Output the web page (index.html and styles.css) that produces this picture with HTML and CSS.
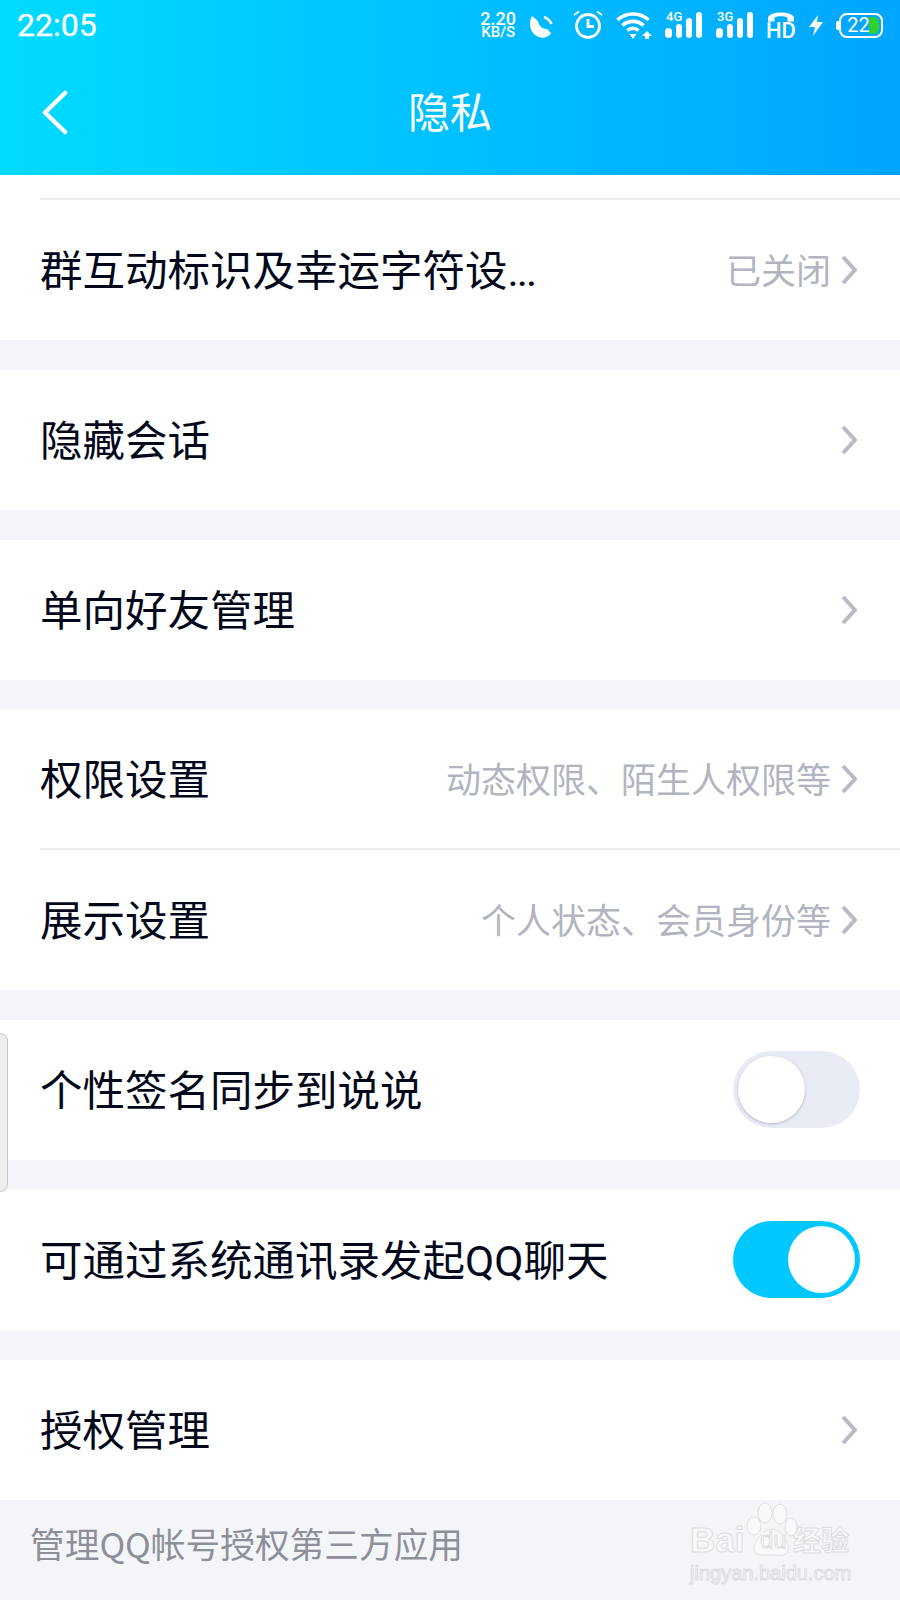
FILE: index.html
```html
<!DOCTYPE html>
<html lang="zh-CN">
<head>
    <meta charset="UTF-8">
    <meta name="viewport" content="width=device-width, initial-scale=1.0">
    <title>隐私</title>
    <link rel="stylesheet" href="styles.css">
</head>
<body>

    <!-- 顶部 -->
    <header class="header">
        <div class="status-bar">
            <span class="time">22:05</span>
            <div class="status-icons">
                <div class="speed"><span>2.20</span><span>KB/S</span></div>
                <svg class="icon-moon" width="24" height="22" viewBox="0 0 24 22">
                    <path d="M3 0 L9 5 C10 10 13 13 18 13 L22 17 C19 23 10 23 5 18 C0 13 0 5 3 0 Z" fill="#fff"/>
                    <path d="M15 1 C18 2 21 5 22.500 8" fill="none" stroke="#fff" stroke-width="2.600"/>
                </svg>
                <svg class="icon-alarm" width="30" height="30" viewBox="0 0 30 30">
                    <circle cx="15" cy="16" r="11.500" fill="none" stroke="#fff" stroke-width="2.800"/>
                    <path d="M15 9 V16.500 H21" fill="none" stroke="#fff" stroke-width="2.800"/>
                    <path d="M1 5 L6 1.500 M29 5 L24 1.500" stroke="#fff" stroke-width="2"/>
                </svg>
                <svg class="icon-wifi" width="36" height="28" viewBox="0 0 36 28">
                    <path d="M1.500 9 C10 1 24 1 32.500 9 M6.500 14.500 C12 9 22 9 27.500 14.500 M11.500 19.500 C14.500 16.500 19.500 16.500 22.500 19.500" fill="none" stroke="#fff" stroke-width="3.600"/>
                    <path d="M13.500 23 H20.500 L17 28 Z" fill="#fff"/>
                    <path d="M31 20 L36 25 H33 V28 H29 V25 H26 Z" fill="#fff"/>
                </svg>
                <div class="signal">
                    <span class="net">4G</span>
                    <svg width="37" height="26" viewBox="0 0 37 26">
                        <rect x="0" y="16" width="7" height="10" rx="3.500" fill="#fff"/>
                        <rect x="11" y="12" width="6" height="14" rx="3" fill="#fff"/>
                        <rect x="21" y="6" width="6" height="20" rx="3" fill="#fff"/>
                        <rect x="31" y="0" width="6" height="26" rx="3" fill="#fff"/>
                    </svg>
                </div>
                <div class="signal">
                    <span class="net">3G</span>
                    <svg width="37" height="26" viewBox="0 0 37 26">
                        <rect x="0" y="16" width="7" height="10" rx="3.500" fill="#fff"/>
                        <rect x="11" y="12" width="6" height="14" rx="3" fill="#fff"/>
                        <rect x="21" y="6" width="6" height="20" rx="3" fill="#fff"/>
                        <rect x="31" y="0" width="6" height="26" rx="3" fill="#fff"/>
                    </svg>
                </div>
                <div class="hd">
                    <svg width="28" height="10" viewBox="0 0 28 10">
                        <path d="M1 9.500 V6 C1 -1.500 27 -1.500 27 6 V9.500 H20.500 V5.500 C17 3.800 11 3.800 7.500 5.500 V9.500 Z" fill="#fff"/>
                    </svg>
                    <span>HD</span>
                </div>
                <svg class="icon-bolt" width="14" height="21" viewBox="0 0 14 21">
                    <path d="M9 0 L0 12 H6 L4 21 L14 7 H8 Z" fill="#fff"/>
                </svg>
                <div class="battery">
                    <span class="battery-level"></span>
                    <span class="battery-text">22</span>
                </div>
            </div>
        </div>
        <div class="nav-bar">
            <svg class="back" width="28" height="46" viewBox="0 0 28 46">
                <path d="M24 3 L4 22.500 L24 42" fill="none" stroke="#fff" stroke-width="4.500" stroke-linecap="round" stroke-linejoin="round"/>
            </svg>
            <span class="nav-title">隐私</span>
        </div>
    </header>

    <!-- 列表 -->
    <main class="content">
        <div class="group first-group">
            <div class="row">
                <span class="row-title">群互动标识及幸运字符设<span class="dots">...</span></span>
                <span class="row-value">已关闭</span>
                <svg class="arrow" width="16" height="30" viewBox="0 0 16 30"><path d="M2 2 L14 15 L2 28" fill="none" stroke="#b8bbc6" stroke-width="4"/></svg>
            </div>
        </div>
        <div class="group">
            <div class="row">
                <span class="row-title">隐藏会话</span>
                <svg class="arrow" width="16" height="30" viewBox="0 0 16 30"><path d="M2 2 L14 15 L2 28" fill="none" stroke="#b8bbc6" stroke-width="4"/></svg>
            </div>
        </div>
        <div class="group">
            <div class="row">
                <span class="row-title">单向好友管理</span>
                <svg class="arrow" width="16" height="30" viewBox="0 0 16 30"><path d="M2 2 L14 15 L2 28" fill="none" stroke="#b8bbc6" stroke-width="4"/></svg>
            </div>
        </div>
        <div class="group">
            <div class="row with-line">
                <span class="row-title">权限设置</span>
                <span class="row-value">动态权限、陌生人权限等</span>
                <svg class="arrow" width="16" height="30" viewBox="0 0 16 30"><path d="M2 2 L14 15 L2 28" fill="none" stroke="#b8bbc6" stroke-width="4"/></svg>
            </div>
            <div class="row">
                <span class="row-title">展示设置</span>
                <span class="row-value">个人状态、会员身份等</span>
                <svg class="arrow" width="16" height="30" viewBox="0 0 16 30"><path d="M2 2 L14 15 L2 28" fill="none" stroke="#b8bbc6" stroke-width="4"/></svg>
            </div>
        </div>
        <div class="group">
            <div class="row">
                <span class="row-title">个性签名同步到说说</span>
                <span class="switch"><span class="knob"></span></span>
            </div>
        </div>
        <div class="group">
            <div class="row">
                <span class="row-title">可通过系统通讯录发起QQ聊天</span>
                <span class="switch on"><span class="knob"></span></span>
            </div>
        </div>
        <div class="group">
            <div class="row">
                <span class="row-title">授权管理</span>
                <svg class="arrow" width="16" height="30" viewBox="0 0 16 30"><path d="M2 2 L14 15 L2 28" fill="none" stroke="#b8bbc6" stroke-width="4"/></svg>
            </div>
        </div>
        <p class="footer-note">管理QQ帐号授权第三方应用</p>
    </main>

    <!-- 左侧悬浮把手 -->
    <div class="side-handle"></div>

    <!-- 水印 -->
    <div class="watermark">
        <div class="wm-top">
            <span class="wm-bai">Bai</span>
            <svg width="52" height="56" viewBox="0 0 52 56">
                <g fill="#f8f9fb" stroke="#dfe0e4" stroke-width="1">
                    <ellipse cx="8" cy="24" rx="7" ry="9"/>
                    <ellipse cx="19" cy="11" rx="7" ry="10"/>
                    <ellipse cx="34" cy="12" rx="7" ry="10"/>
                    <ellipse cx="45" cy="25" rx="6" ry="9"/>
                    <path d="M26 27 C34 27 44 40 42 48 C40 55 32 53 26 53 C18 53 10 55 8 48 C7 40 18 27 26 27 Z"/>
                </g>
            </svg>
            <span class="wm-du">du</span>
            <span class="wm-cn">经验</span>
        </div>
        <div class="wm-url">jingyan.baidu.com</div>
    </div>

</body>
</html>
```

FILE: styles.css
```css
* {
    box-sizing: border-box;
}
html, body {
    margin: 0;
    height: 1600px;
    overflow: hidden;
}
body {
    background-color: #f4f5f9;
    color: #03081a;
    font-family: "Noto Sans CJK SC", "Liberation Sans", sans-serif;
}
/* 顶部 */
.header {
    height: 175px;
    background: linear-gradient(to right, #00dbff, #00a5ff);
    color: #fff;
}
.status-bar {
    height: 50px;
    display: flex;
    align-items: center;
    justify-content: space-between;
    padding: 0 17px 0 17px;
}
.time {
    font-family: Roboto, sans-serif;
    font-size: 32px;
    font-weight: 400;
    -webkit-text-stroke: 0.3px #fff;
}
.status-icons {
    display: flex;
    align-items: center;
}
.speed {
    display: flex;
    flex-direction: column;
    align-items: center;
    font-family: Roboto, sans-serif;
    font-weight: 500;
    margin-right: 13px;
}
.speed span:first-child {
    font-size: 18px;
    line-height: 14px;
}
.speed span:last-child {
    font-size: 15px;
    line-height: 12px;
}
.icon-moon {
    margin: 4px 20px 0 0;
}
.icon-alarm {
    margin-right: 13px;
}
.icon-wifi {
    margin-right: 13px;
}
.signal {
    position: relative;
    margin-right: 14px;
    height: 26px;
}
.signal svg {
    display: block;
}
.net {
    position: absolute;
    left: 1px;
    top: -1px;
    font-family: Roboto, sans-serif;
    font-size: 13px;
    font-weight: 500;
    line-height: 12px;
}
.hd {
    width: 28px;
    display: flex;
    flex-direction: column;
    align-items: center;
    margin-right: 14px;
}
.hd svg {
    display: block;
}
.hd span {
    font-family: Roboto, sans-serif;
    font-size: 22px;
    font-weight: 500;
    line-height: 17px;
}
.icon-bolt {
    margin-right: 16px;
}
.battery {
    position: relative;
    width: 44px;
    height: 25px;
    border: 2px solid #fff;
    border-radius: 8px;
    text-align: center;
}
.battery::before {
    content: "";
    position: absolute;
    left: -5px;
    top: 6px;
    width: 3px;
    height: 9px;
    border-radius: 2px 0 0 2px;
    background-color: #fff;
}
.battery-text {
    position: relative;
    display: block;
    padding-right: 5px;
    font-family: Roboto, sans-serif;
    font-size: 20px;
    line-height: 21px;
}
.battery-level {
    position: absolute;
    right: 2px;
    top: 2px;
    width: 10px;
    height: 17px;
    border-radius: 2px 6px 6px 2px;
    background-color: #2ed12e;
}
.nav-bar {
    height: 125px;
    display: flex;
    align-items: center;
    justify-content: center;
    position: relative;
    padding-bottom: 6px;
}
.back {
    position: absolute;
    left: 41px;
    top: 40px;
}
.nav-title {
    font-size: 42px;
    line-height: 60px;
}
/* 列表 */
.group {
    background-color: #fff;
    margin-bottom: 30px;
}
.first-group {
    padding-top: 23px;
    margin-bottom: 30px;
}
.first-group .row {
    border-top: 2px solid #ededf0;
    height: 142px;
}
.row {
    height: 140px;
    display: flex;
    align-items: center;
    margin-left: 40px;
    padding-right: 42px;
}
.with-line {
    border-bottom: 2px solid #ededf0;
}
.row-title {
    font-family: Roboto, "Noto Sans CJK SC", sans-serif;
    font-size: 42.5px;
    line-height: 60px;
    padding-top: 3px;
    flex: 1;
    white-space: nowrap;
}
.dots {
    letter-spacing: -2px;
}
.row-value {
    font-size: 35px;
    line-height: 50px;
    padding-bottom: 2px;
    color: #b2b5c0;
    margin-right: 10px;
}
.arrow {
    display: block;
    margin-right: 1px;
}
/* 开关 */
.switch {
    position: relative;
    width: 127px;
    height: 77px;
    margin: 0 -2px 2px 0;
    border-radius: 39px;
    background-color: #e9ebf5;
}
.knob {
    position: absolute;
    left: 5px;
    top: 5px;
    width: 67px;
    height: 67px;
    border-radius: 50%;
    background-color: #fff;
    box-shadow: 0 1px 3px rgba(120, 120, 140, 0.45);
}
.switch.on {
    background-color: #00c8ff;
}
.switch.on .knob {
    left: 55px;
    box-shadow: none;
}
.footer-note {
    margin: -30px 0 0;
    padding: 18px 0 0 30px;
    font-size: 34.7px;
    line-height: 50px;
    color: #8e9099;
}
/* 左侧把手 */
.side-handle {
    position: absolute;
    left: 0;
    top: 1033px;
    width: 8px;
    height: 159px;
    background-color: #eeeeef;
    border: 1px solid #c9c9cc;
    border-left: none;
    border-radius: 0 8px 8px 0;
}
/* 水印 */
.watermark {
    position: absolute;
    left: 690px;
    top: 1502px;
    width: 170px;
    color: #f8f9fb;
    -webkit-text-stroke: 1px #dcdde2;
}
.wm-top {
    display: flex;
    align-items: flex-end;
    height: 56px;
    position: relative;
}
.wm-top svg {
    position: absolute;
    left: 56px;
    top: 0;
}
.wm-bai {
    font-family: "Liberation Sans", sans-serif;
    font-size: 35px;
    font-weight: 700;
    line-height: 36px;
    width: 78px;
}
.wm-du {
    position: absolute;
    left: 70px;
    bottom: 6px;
    font-family: "Liberation Sans", sans-serif;
    font-size: 24px;
    line-height: 24px;
}
.wm-cn {
    position: absolute;
    left: 103px;
    bottom: 2px;
    font-size: 28px;
    font-weight: 700;
    line-height: 34px;
    white-space: nowrap;
}
.wm-url {
    font-family: "Liberation Sans", sans-serif;
    font-size: 20px;
    line-height: 24px;
    margin-top: 3px;
    white-space: nowrap;
}
```
